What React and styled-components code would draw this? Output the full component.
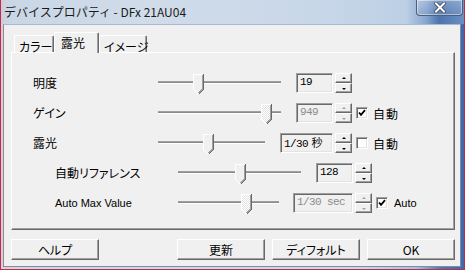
import React, { useId } from "react";
import styled, { createGlobalStyle } from "styled-components";

const GlobalStyle = createGlobalStyle`
  html, body { margin: 0; padding: 0; background: #ffffff; }
  body { font-family: "Noto Sans CJK JP", sans-serif; }
  * { box-sizing: border-box; }
`;

const Window = styled.div`
  width: 465px;
  height: 270px;
  display: flex;
  flex-direction: column;
  border-left: 1px solid #b7304b;
  border-right: 1px solid #b7304b;
  border-bottom: 1px solid #b7304b;
  background: linear-gradient(90deg, #e7c7cf 0px, #e2cdd6 3px, #cbd8e7 30px, #cad9ea 360px, #aac2de 415px, #4e76b0 440px, #3f69ad 463px);
`;

const TitleBar = styled.div`
  height: 24px;
  flex: none;
  display: flex;
  justify-content: space-between;
  align-items: flex-start;
  background: linear-gradient(90deg, #d4c9d6 0px, #c9d6e5 6px, #d0dcea 150px, #c7d6e8 330px, #bccfe5 405px, #87a6cf 425px, #4d74ad 438px, #6a90c4 463px);
`;

const Title = styled.div`
  padding-left: 3px;
  font-family: "Noto Sans CJK JP", sans-serif;
  font-size: 12px;
  line-height: 24px;
  color: #1a1a1a;
  white-space: nowrap;
`;

const CloseButton = styled.div`
  width: 47px;
  height: 16px;
  margin-right: 1px;
  display: flex;
  align-items: center;
  justify-content: center;
  border: 1px solid #4f5f78;
  border-top: none;
  border-radius: 0 0 4px 4px;
  box-shadow: inset 0 0 0 1px rgba(255, 255, 255, 0.45);
  background: linear-gradient(180deg, rgba(255,255,255,0.25), rgba(120,150,200,0.25));
`;

const Frame = styled.div`
  flex: 1;
  display: flex;
  padding: 0 3px 2px 2px;
`;

const Client = styled.div`
  flex: 1;
  display: flex;
  flex-direction: column;
  background: #f0f0f0;
  border: 1px solid #7d8ea3;
  border-top-color: #a9b9cb;
  padding: 7px 5px 6px 7px;
`;

const TabStrip = styled.div`
  height: 20px;
  display: flex;
  align-items: flex-end;
  padding-left: 3px;
`;

const Tab = styled.div`
  position: relative;
  z-index: ${(p) => (p.$active ? 2 : 0)};
  width: ${(p) => p.$w}px;
  height: ${(p) => (p.$active ? 21 : 17)}px;
  margin-bottom: ${(p) => (p.$active ? -1 : 0)}px;
  background: #f0f0f0;
  border-left: 1px solid #ffffff;
  border-top: 1px solid #ffffff;
  border-right: 1px solid #696969;
  border-radius: 2px 2px 0 0;
  box-shadow: inset -1px 0 0 #a0a0a0;
  font-size: 12px;
  line-height: 14px;
  padding-top: ${(p) => (p.$active ? 3 : 4)}px;
  padding-left: ${(p) => (p.$active ? 6 : 4)}px;
  color: #000;
  font-feature-settings: "palt";
  white-space: nowrap;
`;

const Panel = styled.div`
  height: 178px;
  display: flex;
  flex-direction: column;
  padding-top: 15px;
  border: 1px solid;
  border-color: #ffffff #696969 #696969 #ffffff;
  box-shadow: inset -1px -1px 0 #a0a0a0;
`;

const Row = styled.div`
  height: 30px;
  display: flex;
  align-items: center;
  padding-left: ${(p) => p.$indent}px;
`;

const Label = styled.div`
  width: ${(p) => p.$w}px;
  flex: none;
  font-family: ${(p) => (p.$latin ? '"Liberation Sans", Arial, sans-serif' : '"Noto Sans CJK JP", sans-serif')};
  font-size: ${(p) => (p.$latin ? 11 : 12)}px;
  font-feature-settings: "palt";
  color: #000;
  white-space: nowrap;
  margin-top: -1px;
`;

const Slider = styled.div`
  position: relative;
  width: ${(p) => p.$w}px;
  height: 21px;
  flex: none;
  margin-top: 2px;
`;

const Track = styled.div`
  margin-top: 7px;
  height: 3px;
  background: linear-gradient(180deg, #a0a0a0 0px, #a0a0a0 1px, #8a8a8a 1px, #8a8a8a 2px, #ffffff 2px);
`;

const ThumbWrap = styled.div`
  position: absolute;
  top: 0;
  width: 11px;
  height: 21px;
  line-height: 0;
`;

const Edit = styled.div`
  width: ${(p) => p.$w}px;
  height: 20px;
  margin-left: ${(p) => p.$gap}px;
  flex: none;
  background: #f0f0f0;
  border: 1px solid;
  border-color: #a0a0a0 #ffffff #ffffff #a0a0a0;
  box-shadow: inset 1px 1px 0 #696969, inset -1px -1px 0 #e3e3e3;
  padding: 2px 0 0 3px;
  font-family: "Liberation Mono", "Noto Sans CJK JP", monospace;
  font-size: 11px;
  letter-spacing: -0.6px;
  line-height: 13px;
  color: ${(p) => (p.$disabled ? "#8d8d8d" : "#000")};
  white-space: nowrap;
`;

const Kanji = styled.span`
  font-family: "Noto Sans CJK JP", sans-serif;
  font-size: 11px;
  letter-spacing: 0;
  margin-left: 1px;
`;

const Spinner = styled.div`
  width: 17px;
  height: 20px;
  margin-left: 2px;
  flex: none;
  display: flex;
  flex-direction: column;
`;

const SpinButton = styled.div`
  flex: 1;
  display: flex;
  align-items: center;
  justify-content: center;
  background: #f0f0f0;
  border: 1px solid;
  border-color: #ffffff #696969 #696969 #ffffff;
  box-shadow: inset -1px -1px 0 #a0a0a0;
`;

const Arrow = styled.div`
  width: 0;
  height: 0;
  border-left: 2px solid transparent;
  border-right: 2px solid transparent;
  ${(p) => (p.$up ? "border-bottom" : "border-top")}: 2px solid ${(p) => (p.$disabled ? "#a0a0a0" : "#000")};
  margin-top: ${(p) => (p.$up ? -1 : 1)}px;
`;

const CheckBox = styled.div`
  width: 12px;
  height: 12px;
  margin-left: 4px;
  flex: none;
  background: #ffffff;
  border: 1px solid;
  border-color: #a0a0a0 #ffffff #ffffff #a0a0a0;
  box-shadow: inset 1px 1px 0 #696969, inset -1px -1px 0 #e3e3e3;
  line-height: 0;
`;

const CheckText = styled.div`
  margin-left: ${(p) => (p.$latin ? 6 : 5)}px;
  font-family: ${(p) => (p.$latin ? '"Liberation Sans", Arial, sans-serif' : '"Noto Sans CJK JP", sans-serif')};
  font-size: ${(p) => (p.$latin ? 11 : 12)}px;
  letter-spacing: ${(p) => (p.$latin ? 0 : 1)}px;
  color: #000;
  white-space: nowrap;
`;

const ButtonBar = styled.div`
  margin-top: 9px;
  height: 21px;
  display: flex;
  justify-content: space-between;
`;

const ButtonGroup = styled.div`
  display: flex;
  gap: 7px;
`;

const Button = styled.div`
  width: ${(p) => p.$w || 88}px;
  height: 21px;
  display: flex;
  align-items: center;
  justify-content: center;
  background: #f0f0f0;
  border: 1px solid;
  border-color: #ffffff #696969 #696969 #ffffff;
  box-shadow: inset -1px -1px 0 #a0a0a0;
  font-family: "Noto Sans CJK JP", sans-serif;
  font-size: 12px;
  font-feature-settings: "palt";
  color: #000;
`;

function Thumb({ left, disabled }) {
  const id = useId().replace(/:/g, "");
  return (
    <ThumbWrap style={{ left }}>
      <svg width="11" height="21" viewBox="0 0 11 21" shapeRendering="crispEdges">
        <defs>
          <pattern id={id} width="2" height="2" patternUnits="userSpaceOnUse">
            <rect width="2" height="2" fill="#e3e3e3" />
            <rect width="1" height="1" fill="#ffffff" />
            <rect x="1" y="1" width="1" height="1" fill="#ffffff" />
          </pattern>
        </defs>
        <path d="M0 0H11V15L5.5 20.5L0 15Z" fill={disabled ? `url(#${id})` : "#f0f0f0"} />
        <path d="M0.5 15.5V0.5H10" stroke="#ffffff" fill="none" />
        <path d="M1 16L5 20" stroke="#ffffff" fill="none" />
        <path d="M10.5 0V15.5L5.5 20.5" stroke="#696969" fill="none" />
        <path d="M9.5 1V15L5.5 19" stroke="#a0a0a0" fill="none" />
      </svg>
    </ThumbWrap>
  );
}

function CloseGlyph() {
  return (
    <svg width="12" height="11" viewBox="0 0 12 11">
      <path d="M2 1.5L10 9.5M10 1.5L2 9.5" stroke="#3a4458" strokeWidth="3.6" strokeLinecap="square" />
      <path d="M2 1.5L10 9.5M10 1.5L2 9.5" stroke="#ffffff" strokeWidth="2" strokeLinecap="square" />
    </svg>
  );
}

function Check({ checked }) {
  return (
    <CheckBox>
      {checked && (
        <svg width="10" height="10" viewBox="0 0 10 10">
          <path d="M2 4.5L4 6.8L8 2.2" stroke="#000" strokeWidth="1.8" fill="none" />
        </svg>
      )}
    </CheckBox>
  );
}

const rows = [
  { label: "明度", indent: 21, labelW: 125, trackW: 123, thumb: 35, gap: 15, editW: 37, value: "19" },
  { label: "ゲイン", indent: 21, labelW: 125, trackW: 123, thumb: 103, gap: 15, editW: 37, value: "949", disabled: true, check: { checked: true, text: "自動" } },
  { label: "露光", indent: 21, labelW: 125, trackW: 107, thumb: 45, gap: 15, editW: 53, value: "1/30", unit: "秒", check: { checked: false, text: "自動" } },
  { label: "自動リファレンス", indent: 43, labelW: 123, trackW: 123, thumb: 57, gap: 15, editW: 37, value: "128" },
  { label: "Auto Max Value", latin: true, indent: 43, labelW: 123, trackW: 101, thumb: 63, gap: 14, editW: 60, value: "1/30 sec", disabled: true, check: { checked: true, text: "Auto", latin: true } },
];

export default function App() {
  return (
    <>
      <GlobalStyle />
      <Window>
        <TitleBar>
          <Title>デバイスプロパティ - DFx 21AU04</Title>
          <CloseButton>
            <CloseGlyph />
          </CloseButton>
        </TitleBar>
        <Frame>
          <Client>
            <TabStrip>
              <Tab $w={40}>カラー</Tab>
              <Tab $w={45} $active>露光</Tab>
              <Tab $w={48}>イメージ</Tab>
            </TabStrip>
            <Panel>
              {rows.map((r) => (
                <Row key={r.label} $indent={r.indent}>
                  <Label $w={r.labelW} $latin={r.latin}>{r.label}</Label>
                  <Slider $w={r.trackW}>
                    <Track />
                    <Thumb left={r.thumb} disabled={r.disabled} />
                  </Slider>
                  <Edit $w={r.editW} $gap={r.gap} $disabled={r.disabled}>
                    {r.value}
                    {r.unit && <Kanji> {r.unit}</Kanji>}
                  </Edit>
                  <Spinner>
                    <SpinButton><Arrow $up $disabled={r.disabled} /></SpinButton>
                    <SpinButton><Arrow $disabled={r.disabled} /></SpinButton>
                  </Spinner>
                  {r.check && (
                    <>
                      <Check checked={r.check.checked} />
                      <CheckText $latin={r.check.latin}>{r.check.text}</CheckText>
                    </>
                  )}
                </Row>
              ))}
            </Panel>
            <ButtonBar>
              <Button $w={88}>ヘルプ</Button>
              <ButtonGroup>
                <Button>更新</Button>
                <Button>ディフォルト</Button>
                <Button>OK</Button>
              </ButtonGroup>
            </ButtonBar>
          </Client>
        </Frame>
      </Window>
    </>
  );
}
